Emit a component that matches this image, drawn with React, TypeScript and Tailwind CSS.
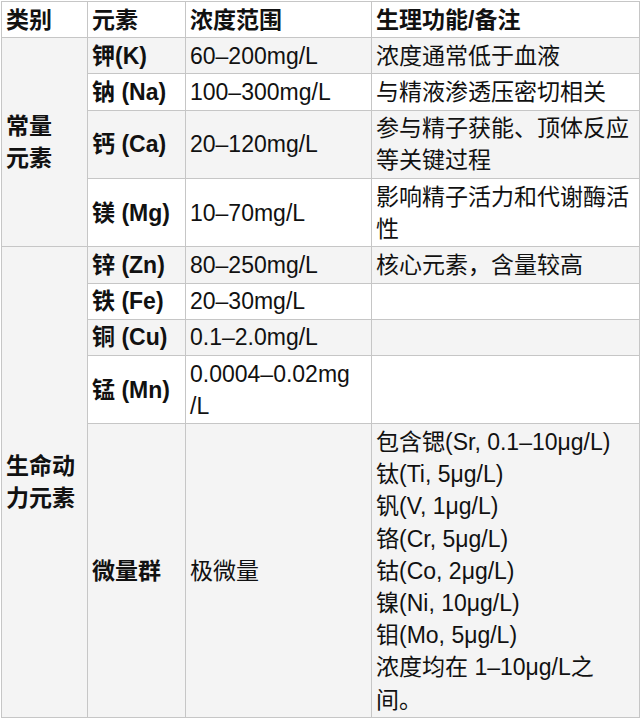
import type { ReactNode } from "react";

interface Row {
  element: ReactNode;
  range: ReactNode;
  note: ReactNode;
}

const groups: { category: ReactNode; rows: Row[] }[] = [
  {
    category: (
      <>
        常量
        <br />
        元素
      </>
    ),
    rows: [
      { element: "钾(K)", range: "60–200mg/L", note: "浓度通常低于血液" },
      { element: "钠 (Na)", range: "100–300mg/L", note: "与精液渗透压密切相关" },
      {
        element: "钙 (Ca)",
        range: "20–120mg/L",
        note: (
          <>
            参与精子获能、顶体反应
            <br />
            等关键过程
          </>
        ),
      },
      {
        element: "镁 (Mg)",
        range: "10–70mg/L",
        note: (
          <>
            影响精子活力和代谢酶活
            <br />性
          </>
        ),
      },
    ],
  },
  {
    category: (
      <>
        生命动
        <br />
        力元素
      </>
    ),
    rows: [
      { element: "锌 (Zn)", range: "80–250mg/L", note: "核心元素，含量较高" },
      { element: "铁 (Fe)", range: "20–30mg/L", note: "" },
      { element: "铜 (Cu)", range: "0.1–2.0mg/L", note: "" },
      {
        element: "锰 (Mn)",
        range: (
          <>
            0.0004–0.02mg
            <br />
            /L
          </>
        ),
        note: "",
      },
      {
        element: "微量群",
        range: "极微量",
        note: (
          <>
            包含锶(Sr, 0.1–10μg/L)
            <br />
            钛(Ti, 5μg/L)
            <br />
            钒(V, 1μg/L)
            <br />
            铬(Cr, 5μg/L)
            <br />
            钴(Co, 2μg/L)
            <br />
            镍(Ni, 10μg/L)
            <br />
            钼(Mo, 5μg/L)
            <br />
            浓度均在 1–10μg/L之
            <br />
            间。
          </>
        ),
      },
    ],
  },
];

const cell = "border border-[#c6c6c6] px-1 py-[1.5px] align-middle";

export default function App() {
  let stripe = 0;
  return (
    <div className="bg-white pl-px pt-px font-['Liberation_Sans','Noto_Sans_CJK_SC',sans-serif] text-[23px] leading-[32.2px] text-[#111]">
      <table className="w-[638px] table-fixed border-collapse">
        <colgroup>
          <col className="w-[86px]" />
          <col className="w-[98px]" />
          <col className="w-[186px]" />
          <col className="w-[268px]" />
        </colgroup>
        <thead>
          <tr className="bg-white text-left font-bold">
            <th className={cell}>类别</th>
            <th className={cell}>元素</th>
            <th className={cell}>浓度范围</th>
            <th className={cell}>生理功能/备注</th>
          </tr>
        </thead>
        <tbody>
          {groups.map((g, gi) =>
            g.rows.map((r, ri) => {
              const gray = stripe++ % 2 === 0;
              return (
                <tr key={`${gi}-${ri}`} className={gray ? "bg-[#f4f4f4]" : "bg-white"}>
                  {ri === 0 && (
                    <td rowSpan={g.rows.length} className={`${cell} bg-[#f4f4f4] font-bold`}>
                      {g.category}
                    </td>
                  )}
                  <td className={`${cell} font-bold`}>{r.element}</td>
                  <td className={cell}>{r.range}</td>
                  <td className={cell}>{r.note}</td>
                </tr>
              );
            })
          )}
        </tbody>
      </table>
    </div>
  );
}
